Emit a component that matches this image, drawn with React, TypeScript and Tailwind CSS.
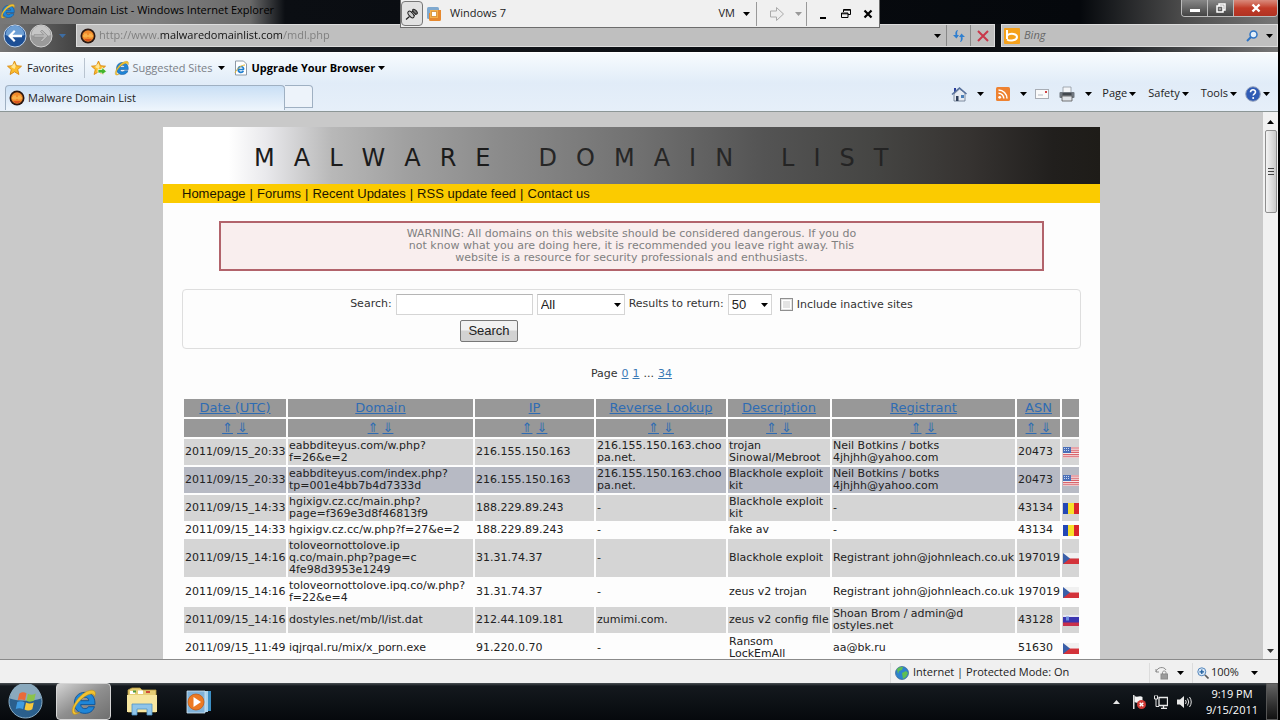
import type { ReactNode } from "react";

const ui = "font-['Open_Sans','Noto_Sans',sans-serif]";
const verdana = "font-['DejaVu_Sans',Verdana,sans-serif]";
const arial = "font-['Liberation_Sans',Arial,sans-serif]";

function Caret({ className = "text-black" }: { className?: string }) {
  return (
    <svg className={"h-1 w-[7px] shrink-0 " + className} viewBox="0 0 7 4" aria-hidden="true">
      <path d="M0 0h7L3.5 4z" fill="currentColor" />
    </svg>
  );
}

function IeLogo({ className = "size-4" }: { className?: string }) {
  return (
    <svg className={"shrink-0 " + className} viewBox="0 0 32 32" aria-hidden="true">
      <path
        d="M28.5 19H12.2c.3 3 2.2 4.6 4.8 4.6 2 0 3.300-.8 4-2.200h6.900C26.400 26.300 22.600 29 17 29 9.600 29 5 24.300 5 17.300 5 10 9.800 5 17 5c7.300 0 11.500 5 11.500 12.300zM12.300 14.500h9.200c-.3-2.500-2-4-4.500-4-2.600 0-4.300 1.500-4.700 4z"
        fill="#1f86d8"
        stroke="#0c4f93"
        strokeWidth="1"
      />
      <path
        d="M3.500 29.500C-.5 25 8 10 18 4.500 24 1.500 29 2 29 6c0 1.500-.5 3-1 4 0-3-3-4.500-8-2C11 12.500 3 23 5.500 27.500c1 1.500 3.500 1 6-.2-3 2.700-6.500 3.700-8 2.200z"
        fill="#f2c230"
        stroke="#b98a12"
        strokeWidth=".6"
      />
    </svg>
  );
}

function SiteIcon() {
  return (
    <svg className="size-4 shrink-0" viewBox="0 0 16 16" aria-hidden="true">
      <circle cx="8" cy="8" r="7.500" fill="#2a1712" />
      <circle cx="8" cy="8" r="5.800" fill="#f08a2c" />
      <path d="M3 7.500h10v1H3z" fill="#ffd35c" />
      <path d="M4 5.500h3v4H4zM9 5.500h3v4H9z" fill="#f9b04a" />
      <path d="M4 11h8l-2 2H6z" fill="#d9541e" />
    </svg>
  );
}

function Star({ add = false }: { add?: boolean }) {
  return (
    <svg className="size-4 shrink-0" viewBox="0 0 16 16" aria-hidden="true">
      <path
        d="M7.500 1l2 4.700 5 .5-3.800 3.300 1.200 5-4.400-2.700L3.100 14.500l1.200-5L.500 6.200l5-.5z"
        fill="#fbbd2c"
        stroke="#d98a12"
        strokeWidth=".9"
      />
      <path d="M7.500 3l1.200 3.500L7.500 9 4 7z" fill="#ffe696" />
      {add && <path d="M7 9.500h4V7.500l4.500 3.800L11 15v-2H7z" fill="#44b52c" stroke="#fff" strokeWidth=".7" />}
    </svg>
  );
}

function Pin() {
  return (
    <svg className="size-3.5" viewBox="0 0 14 14" fill="none" stroke="#222" aria-hidden="true">
      <path d="M1 12.500l3.500-3" strokeWidth="1.200" />
      <ellipse cx="6" cy="7.500" rx="2" ry="4" transform="rotate(-42 6 7.500)" fill="#ccc" />
      <path d="M6 5.500l3-2M8.800 9l2.500-2.500" />
      <ellipse cx="10" cy="4.700" rx="1.500" ry="3" transform="rotate(-42 10 4.700)" fill="#777" />
    </svg>
  );
}

function VmTile() {
  return (
    <svg className="size-4" viewBox="0 0 16 16" aria-hidden="true">
      <rect x="1" y="1" width="12" height="12" rx="1.500" fill="#7fa9cf" />
      <path d="M3 7h8v-3h4v9.500a1.500 1.500 0 0 1-1.500 1.500h-9A1.500 1.500 0 0 1 3 13.500z" fill="#e6892f" />
      <rect x="4" y="4" width="8" height="8" fill="#f5b04c" />
      <rect x="5.500" y="5.500" width="5" height="5" fill="#fff" stroke="#d99a45" />
    </svg>
  );
}

function VmBar() {
  return (
    <div
      className={
        "absolute top-0 left-1/2 z-10 flex h-7 w-[480px] -translate-x-1/2 items-center border-x border-b border-[#6d6d6d] bg-[#f0f0f0] text-[11px] text-[#222] " +
        ui
      }
    >
      <button aria-label="Pin toolbar" className="flex h-[25px] w-[22px] items-center justify-center rounded-sm border border-[#777] bg-[#e2e2e2]">
        <Pin />
      </button>
      <span className="ml-[3px] flex items-center gap-2">
        <VmTile />
        Windows 7
      </span>
      <button className="ml-auto flex h-6 items-center gap-2 pr-1.5">
        VM <Caret />
      </button>
      <div className="flex h-6 items-center gap-2.5 border-x border-[#999] pr-1 pl-3">
        <svg className="h-4 w-4" viewBox="0 0 16 16" aria-hidden="true">
          <path d="M1.500 5h6V1.500l7 6.500-7 6.500V11h-6z" fill="#eee" stroke="#aaa" />
        </svg>
        <Caret className="text-[#999]" />
      </div>
      <div className="flex items-center gap-3 pr-1.5 pl-2.5 text-black">
        <button aria-label="Minimize toolbar" className="flex h-3 w-3 items-end justify-center">
          <span className="mb-px h-0.5 w-1.5 bg-black" />
        </button>
        <button aria-label="Restore toolbar">
          <svg className="size-2.5" viewBox="0 0 10 10" fill="none" stroke="#000" aria-hidden="true">
            <path d="M2.500 3V.5h7v5H7M.5 4h6.500v4.500H.5zM2.500 1.200h7M.5 4.800H7" />
          </svg>
        </button>
        <button aria-label="Close toolbar">
          <svg className="size-2.5" viewBox="0 0 10 10" stroke="#000" strokeWidth="2.200" aria-hidden="true">
            <path d="M1.500 1.500l7 7M8.500 1.500l-7 7" />
          </svg>
        </button>
      </div>
    </div>
  );
}

function TitleBar() {
  return (
    <div className="flex h-6 items-start justify-between bg-[linear-gradient(90deg,#777_0px,#828282_140px,#6a6a6a_250px,#0b0e13_285px,#05080c_1080px,#4a4a4a_1180px,#777_100%)]">
      <div className="flex h-[21px] items-center gap-1 text-[11px] text-black">
        <IeLogo />
        <span>Malware Domain List - Windows Internet Explorer</span>
      </div>
      <div className="flex h-[17px] overflow-hidden rounded-b border border-t-0 border-[#bbb]">
        <button aria-label="Minimize" className="flex w-[26px] items-end justify-center border-r border-[#bbb] bg-linear-to-b from-[#888] to-[#444] pb-1">
          <span className="h-[3px] w-2.5 bg-white" />
        </button>
        <button aria-label="Restore" className="flex w-[26px] items-center justify-center border-r border-[#bbb] bg-linear-to-b from-[#888] to-[#444]">
          <svg className="size-2.5" viewBox="0 0 10 10" fill="none" stroke="#fff" strokeWidth="1.500" aria-hidden="true">
            <path d="M3 3V1h6v6H7M1 3h6v6H1z" />
            <path d="M3.500 6h1" />
          </svg>
        </button>
        <button aria-label="Close" className="flex w-[43px] items-center justify-center bg-linear-to-b from-[#d98a7c] via-[#c23b28] to-[#b03222]">
          <svg className="size-2.5" viewBox="0 0 10 10" stroke="#fff" strokeWidth="2.400" aria-hidden="true">
            <path d="M1.500 1.500l7 7M8.500 1.500l-7 7" />
          </svg>
        </button>
      </div>
    </div>
  );
}

function RoundArrow({ back = false }: { back?: boolean }) {
  return (
    <svg className="size-[24px]" viewBox="0 0 24 24" aria-hidden="true">
      <circle cx="12" cy="12" r="11" fill={back ? "#1d4f95" : "#9a9a9a"} stroke={back ? "#c4d6ea" : "#d0d0d0"} />
      <path d="M2.500 11a9.500 9.500 0 0 1 19 0c-5 2-14 2-19 0z" fill={back ? "#6e9fd4" : "#c6c6c6"} />
      {back ? (
        <path d="M5 12l6-6 1.500 1.500-3 3.200H19v2.600H9.500l3 3.200L11 18z" fill="#fff" />
      ) : (
        <path d="M19 12l-6-6-1.500 1.500 3 3.200H5v2.600h9.500l-3 3.200L13 18z" fill="#b8b8b8" stroke="#8c8c8c" strokeWidth=".7" />
      )}
    </svg>
  );
}

function AddressRow() {
  return (
    <div className="flex h-7 items-start bg-[linear-gradient(90deg,#777_0px,#444_75px,#181b20_300px,#05080c_900px,#15181c_1100px,#777_100%)] text-[11px]">
      <div className="flex w-[76px] items-center gap-0.5 pl-[3px]">
        <button aria-label="Back">
          <RoundArrow back />
        </button>
        <button aria-label="Forward">
          <RoundArrow />
        </button>
        <button aria-label="Recent pages" className="pl-1">
          <Caret className="text-[#3d6da3]" />
        </button>
      </div>
      <div className="flex h-[23px] min-w-0 flex-1 items-center border border-[#dcdcdc] bg-[#bfbfbf] pl-[3px]">
        <SiteIcon />
        <input
          aria-label="Address"
          defaultValue="http://www.malwaredomainlist.com/mdl.php"
          className="ml-[3px] min-w-0 flex-1 bg-[linear-gradient(90deg,#7d7d7d_61px,#111_61px,#111_183px,#7d7d7d_183px)] bg-clip-text text-transparent outline-none"
        />
        <button aria-label="Address history" className="flex h-full w-[18px] items-center justify-center">
          <Caret />
        </button>
        <button aria-label="Refresh" className="flex h-full w-6 items-center justify-center border-l border-[#888]">
          <svg className="size-3.5" viewBox="0 0 14 14" aria-hidden="true">
            <path d="M5.500 1C3.500 2 3 3.500 3.500 6H1l3.500 3.500L7 6H5.300C5 4 5 2.500 6 1zM8.500 13c2-1 2.500-2.500 2-5H13L9.500 4.500 7 8h1.700c.3 2 .3 3.500-.7 5z" fill="#2f7fd0" />
          </svg>
        </button>
        <button aria-label="Stop" className="flex h-full w-6 items-center justify-center border-l border-[#888]">
          <svg className="size-3" viewBox="0 0 12 12" stroke="#c9374a" strokeWidth="2" aria-hidden="true">
            <path d="M1 1l10 10M11 1L1 11" />
          </svg>
        </button>
      </div>
      <div className="ml-1.5 flex h-[23px] w-[277px] items-center border border-[#dcdcdc] bg-[#bfbfbf] pl-0.5">
        <svg className="size-4" viewBox="0 0 16 16" aria-hidden="true">
          <rect width="16" height="16" rx="1" fill="#f5a11c" />
          <path d="M3 2v9M3 7.500c4-3 10-1.500 10 1.500 0 3.500-7 4.500-10 2.500" fill="none" stroke="#fff" strokeWidth="2" />
        </svg>
        <input aria-label="Search with Bing" placeholder="Bing" className="ml-1 min-w-0 flex-1 italic outline-none placeholder:text-[#666]" />
        <button aria-label="Search the web" className="px-2">
          <svg className="size-3" viewBox="0 0 12 12" fill="none" aria-hidden="true">
            <circle cx="7.500" cy="4.500" r="3.500" stroke="#2f74c4" strokeWidth="1.500" fill="#e3effa" />
            <path d="M5 7l-4 4" stroke="#2f74c4" strokeWidth="2" />
          </svg>
        </button>
        <button aria-label="Search options" className="pr-1">
          <Caret />
        </button>
      </div>
    </div>
  );
}

function FavoritesBar() {
  return (
    <div className="flex h-[31px] items-center border-t border-white bg-linear-to-b from-[#f7fbfe] to-[#e1ecf8] pl-[7px] text-[11px] text-[#222]">
      <button className="flex items-center gap-1">
        <Star /> Favorites
      </button>
      <span className="mr-1.5 ml-2.5 h-5 w-px bg-[#b9c4d0]" />
      <button aria-label="Add to Favorites Bar">
        <Star add />
      </button>
      <button className="ml-[7px] flex items-center gap-[3px] text-[#7b8087]">
        <IeLogo /> Suggested Sites <Caret className="ml-0.5 text-black" />
      </button>
      <button className="ml-2 flex items-center gap-[3px] font-bold text-black">
        <svg className="size-4" viewBox="0 0 16 16" aria-hidden="true">
          <path d="M2.500 1h8l3 3v11h-11z" fill="#fff" stroke="#8d99a6" />
          <path d="M11 9.500H5.500M10.700 9.500c0-4-5.500-4-5.500 0 0 3.500 4 3.500 5.200 1.500" fill="none" stroke="#1f7fd0" strokeWidth="1.700" />
          <path d="M2 13C4 8 9 5 12 5" stroke="#e7b52c" fill="none" />
        </svg>
        Upgrade Your Browser <Caret />
      </button>
    </div>
  );
}

function TabRow() {
  return (
    <div className="flex h-[29px] items-end border-b border-[#8c9696] bg-linear-to-b from-[#e1ecf8] to-[#e6eff9] pb-px pl-[5px] text-[11px] text-[#222]">
      <div role="tablist" className="flex items-end self-stretch">
        <button role="tab" aria-selected="true" className="flex h-[25px] w-[280px] items-center gap-[3px] rounded-t border border-b-0 border-[#9fb0c2] bg-linear-to-b from-[#c9dff5] to-[#eef5fc] pl-[3px]">
          <SiteIcon /> Malware Domain List
        </button>
        <button role="tab" aria-label="New tab" className="mb-0.5 h-[23px] w-7 rounded-tr border border-l-0 border-[#9fb0c2] bg-[#edf3fa]" />
      </div>
      <div className="ml-auto flex items-center self-stretch pr-2 pb-1.5">
        <button className="flex items-center gap-2.5" aria-label="Home">
          <svg className="size-4" viewBox="0 0 16 16" aria-hidden="true">
            <path d="M3 2h2v4H3z" fill="#2b3f9c" />
            <path d="M3 8v7h11V7L8.500 3z" fill="#e6ebf2" stroke="#64748a" strokeWidth=".8" />
            <path d="M1 8.500L8.500 2 15.500 8" fill="none" stroke="#56709c" strokeWidth="1.500" />
            <path d="M5 10h2.500v5H5z" fill="#2f3f59" />
            <path d="M10 9h3v3h-3z" fill="#4a7fb8" />
          </svg>
          <Caret />
        </button>
        <button className="ml-3 flex items-center gap-2.5" aria-label="Feeds">
          <svg className="size-3.5" viewBox="0 0 14 14" aria-hidden="true">
            <rect width="14" height="14" rx="1.500" fill="#ee8231" />
            <circle cx="3.700" cy="10.300" r="1.400" fill="#fff" />
            <path d="M2.500 6.200a5.300 5.300 0 0 1 5.300 5.300M2.500 3a8.500 8.500 0 0 1 8.500 8.500" fill="none" stroke="#fff" strokeWidth="1.500" />
          </svg>
          <Caret />
        </button>
        <button className="ml-2" aria-label="Read mail">
          <svg className="h-2.5 w-3.5" viewBox="0 0 14 10" aria-hidden="true">
            <rect x=".5" y=".5" width="13" height="9" fill="#fafafa" stroke="#a8adb5" />
            <path d="M10 2h2v2h-2z" fill="#d04545" />
            <path d="M3 6h5" stroke="#b5bac2" />
          </svg>
        </button>
        <button className="ml-2.5 flex items-center gap-2.5" aria-label="Print">
          <svg className="size-4" viewBox="0 0 16 16" aria-hidden="true">
            <path d="M4 1h8v6H4z" fill="#f3f5f8" stroke="#8f979f" strokeWidth=".8" />
            <rect x=".5" y="6" width="15" height="6" rx="1" fill="#6f767e" />
            <path d="M3 10h10v5H3z" fill="#dfe3e8" stroke="#555" strokeWidth=".8" />
            <path d="M3.500 8h9" stroke="#303438" strokeWidth="1.400" />
          </svg>
          <Caret />
        </button>
        <button className="ml-2.5 flex items-center gap-0.5">
          Page <Caret />
        </button>
        <button className="ml-3 flex items-center gap-0.5">
          Safety <Caret />
        </button>
        <button className="ml-3 flex items-center gap-0.5">
          Tools <Caret />
        </button>
        <button className="ml-2 flex items-center gap-0.5" aria-label="Help">
          <svg className="size-4" viewBox="0 0 16 16" aria-hidden="true">
            <circle cx="8" cy="8" r="7.300" fill="#2f5bb5" stroke="#9aa6bd" />
            <path d="M5.500 6.300c0-3.300 5-3.300 5-.3 0 1.800-2.300 1.800-2.300 3.600" fill="none" stroke="#fff" strokeWidth="1.600" />
            <circle cx="8.200" cy="11.900" r="1" fill="#fff" />
          </svg>
          <Caret />
        </button>
      </div>
    </div>
  );
}

const banner = [
  { word: "MALWARE", tone: "text-[#1b1b1b]" },
  { word: "DOMAIN", tone: "text-[#262626]" },
  { word: "LIST", tone: "text-[#242424]" },
];

function Banner() {
  return (
    <h1
      aria-label="Malware Domain List"
      className={
        "flex h-[57px] items-center gap-12 bg-[linear-gradient(90deg,#fff_0%,#fff_7%,#e9e9ec_11%,#b8b8b8_18%,#a0a0a0_26%,#8b8b8b_36%,#727272_50%,#545454_64%,#454543_76%,#363331_86%,#211f1d_95%,#1e1c18_100%)] pt-1 pl-[91px] text-2xl font-normal " +
        verdana
      }
    >
      {banner.map(({ word, tone }) => (
        <span key={word} className={"flex gap-[19px] " + tone}>
          {word.split("").map((letter, i) => (
            <span key={i}>{letter}</span>
          ))}
        </span>
      ))}
    </h1>
  );
}

const links = ["Homepage", "Forums", "Recent Updates", "RSS update feed", "Contact us"];

function SiteNav() {
  return (
    <nav className={"flex h-[19px] items-center gap-1 bg-[#fbcb00] pl-[19px] text-[13px] text-[#1d1600] " + arial}>
      {links.map((link, i) => (
        <span key={link} className="flex gap-1">
          {i > 0 && <span>|</span>}
          <a href="#">{link}</a>
        </span>
      ))}
    </nav>
  );
}

function Drop({ id, width, options }: { id: string; width: string; options: string[] }) {
  return (
    <span className={"relative flex items-center " + width}>
      <select id={id} aria-label={id} className={"h-[21px] w-full appearance-none border border-[#d5d5d5] border-t-[#b5b5b5] bg-white pl-[3px] text-[13px] text-[#222] " + arial}>
        {options.map((o) => (
          <option key={o}>{o}</option>
        ))}
      </select>
      <span className="pointer-events-none absolute right-1 flex">
        <Caret />
      </span>
    </span>
  );
}

function SearchForm() {
  return (
    <form className="mx-[19px] mt-[18px] flex h-[60px] flex-col gap-[5px] rounded-sm border border-[#dedede] pt-1 text-[11px] text-[#333]" onSubmit={(e) => e.preventDefault()}>
      <div className="flex items-center justify-center gap-1">
        <label htmlFor="query">Search:</label>
        <input id="query" className="h-[21px] w-[137px] border border-[#d5d5d5] border-t-[#b5b5b5] bg-white px-1" />
        <Drop id="Field" width="w-[88px]" options={["All", "Domain", "IP", "ASN"]} />
        <label htmlFor="Results">Results to return:</label>
        <Drop id="Results" width="w-[44px]" options={["50", "100"]} />
        <input id="inactive" type="checkbox" className="ml-1 size-[13px] appearance-none border border-[#8f8f8f] bg-[#e4e4e4] outline-1 -outline-offset-3 outline-white" />
        <label htmlFor="inactive" className="pt-0.5">Include inactive sites</label>
      </div>
      <button className={"ml-[277px] h-[22px] w-[58px] rounded-xs border border-[#777] bg-linear-to-b from-[#f2f2f2] from-45% to-[#d2d2d2] to-50% text-[13px] text-[#222] " + arial}>
        Search
      </button>
    </form>
  );
}

function Flag({ country }: { country: string }) {
  const art: Record<string, ReactNode> = {
    us: (
      <>
        <path fill="#f4e9ea" d="M0 0h16v11H0z" />
        <path stroke="#d9636b" strokeWidth="1.100" d="M0 1h16M0 3.200h16M0 5.400h16M0 7.600h16M0 9.800h16" />
        <path fill="#4a6fb8" d="M0 0h8v6H0z" />
        <path stroke="#c9d6ee" strokeDasharray="1 1" d="M1 1.500h6M1 3.500h6" />
      </>
    ),
    ro: (
      <>
        <path fill="#2447b5" d="M0 0h5v11H0z" />
        <path fill="#f6df2a" d="M5 0h6v11H5z" />
        <path fill="#d9252b" d="M11 0h5v11h-5z" />
      </>
    ),
    cz: (
      <>
        <path fill="#f1f1f1" d="M0 0h16v5.500H0z" />
        <path fill="#d3333a" d="M0 5.500h16V11H0z" />
        <path fill="#3a5ea8" d="M0 0l7 5.500L0 11z" />
      </>
    ),
    si: (
      <>
        <path fill="#e6e6f2" d="M0 0h16v3H0z" />
        <path fill="#3a35b0" d="M0 2h16v6H0z" />
        <path fill="#c9304b" d="M0 7.500h16V11H0z" />
        <path fill="#6f8fe0" d="M3 1.500h3v4H3z" />
      </>
    ),
  };
  return (
    <svg className="block h-[11px] w-4" viewBox="0 0 16 11" role="img" aria-label={country}>
      {art[country]}
    </svg>
  );
}

const columns = [
  { title: "Date (UTC)", width: "w-[102px]" },
  { title: "Domain", width: "" },
  { title: "IP", width: "w-[119px]" },
  { title: "Reverse Lookup", width: "w-[130px]" },
  { title: "Description", width: "w-[102px]" },
  { title: "Registrant", width: "w-[183px]" },
  { title: "ASN", width: "w-[43px]" },
];

const gray = "bg-[#d5d5d5]";
const white = "bg-[#fdfdfd]";

const rows = [
  { tone: gray, flag: "us", cells: ["2011/09/15_20:33", "eabbditeyus.com/w.php?\nf=26&e=2", "216.155.150.163", "216.155.150.163.choo\npa.net.", "trojan\nSinowal/Mebroot", "Neil Botkins / botks\n4jhjhh@yahoo.com", "20473"] },
  { tone: "bg-[#b7bac4]", flag: "us", cells: ["2011/09/15_20:33", "eabbditeyus.com/index.php?\ntp=001e4bb7b4d7333d", "216.155.150.163", "216.155.150.163.choo\npa.net.", "Blackhole exploit\nkit", "Neil Botkins / botks\n4jhjhh@yahoo.com", "20473"] },
  { tone: gray, flag: "ro", cells: ["2011/09/15_14:33", "hgixigv.cz.cc/main.php?\npage=f369e3d8f46813f9", "188.229.89.243", "-", "Blackhole exploit\nkit", "-", "43134"] },
  { tone: white, flag: "ro", cells: ["2011/09/15_14:33", "hgixigv.cz.cc/w.php?f=27&e=2", "188.229.89.243", "-", "fake av", "-", "43134"] },
  { tone: gray, flag: "cz", cells: ["2011/09/15_14:16", "toloveornottolove.ip\nq.co/main.php?page=c\n4fe98d3953e1249", "31.31.74.37", "-", "Blackhole exploit", "Registrant john@johnleach.co.uk", "197019"] },
  { tone: white, flag: "cz", cells: ["2011/09/15_14:16", "toloveornottolove.ipq.co/w.php?\nf=22&e=4", "31.31.74.37", "-", "zeus v2 trojan", "Registrant john@johnleach.co.uk", "197019"] },
  { tone: gray, flag: "si", cells: ["2011/09/15_14:16", "dostyles.net/mb/l/ist.dat", "212.44.109.181", "zumimi.com.", "zeus v2 config file", "Shoan Brom / admin@d\nostyles.net", "43128"] },
  { tone: white, flag: "cz", cells: ["2011/09/15_11:49", "iqjrqal.ru/mix/x_porn.exe", "91.220.0.70", "-", "Ransom\nLockEmAll", "aa@bk.ru", "51630"] },
];

function DomainTable() {
  return (
    <div className="mx-[19px] mt-[15px]">
      <table className="w-full table-fixed border-separate border-spacing-0.5 text-left text-[11px] leading-3 text-[#222]">
        <colgroup>
          {columns.map((c) => (
            <col key={c.title} className={c.width} />
          ))}
          <col className="w-[17px]" />
        </colgroup>
        <thead className="text-center text-[13px] leading-4 text-[#2f6cb3]">
          <tr className="bg-[#989898]">
            {columns.map((c) => (
              <th key={c.title} scope="col" className="p-px font-normal whitespace-nowrap">
                <a href="#" className="underline">
                  {c.title}
                </a>
              </th>
            ))}
            <th className="p-px" aria-label="Country" />
          </tr>
          <tr className="bg-[#989898]">
            {columns.map((c) => (
              <td key={c.title} className="p-px">
                <span className="flex justify-center gap-1">
                  <a href="#" aria-label={"Sort ascending by " + c.title} className="underline">
                    ⇑
                  </a>
                  <a href="#" aria-label={"Sort descending by " + c.title} className="underline">
                    ⇓
                  </a>
                </span>
              </td>
            ))}
            <td className="p-px" />
          </tr>
        </thead>
        <tbody>
          {rows.map((row, r) => (
            <tr key={r} className={row.tone}>
              {row.cells.map((cell, i) => (
                <td key={i} className="p-px whitespace-pre">
                  {cell}
                </td>
              ))}
              <td className="p-px">
                <Flag country={row.flag} />
              </td>
            </tr>
          ))}
        </tbody>
      </table>
    </div>
  );
}

function Scrollbar() {
  return (
    <div className="flex w-[15px] shrink-0 flex-col items-center justify-between bg-[#f1f1f1] py-1">
      <div className="flex w-full flex-col items-center gap-0.5">
        <Caret className="my-1 rotate-180" />
        <div className="flex h-[83px] w-3 flex-col items-center justify-center gap-0.5 rounded-xs border border-[#8e8e8e] bg-linear-to-r from-[#f4f4f4] to-[#c9c9c9]">
          <span className="h-px w-1.5 bg-[#444]" />
          <span className="h-px w-1.5 bg-[#444]" />
          <span className="h-px w-1.5 bg-[#444]" />
        </div>
      </div>
      <Caret className="mb-0.5 text-[#333]" />
    </div>
  );
}

function Page() {
  return (
    <div className="flex min-h-0 flex-1 overflow-hidden bg-[#c9c9c9]">
      <main className={"min-w-0 flex-1 overflow-hidden pt-[15px] " + verdana}>
        <div className="mx-auto min-h-full w-full max-w-[937px] bg-[#fdfdfd]">
          <Banner />
          <SiteNav />
          <p className="mx-auto mt-[18px] w-[88%] border-2 border-[#b2636b] bg-[#f9eeee] py-[5px] text-center text-[11px] leading-3 text-[#808080]">
            WARNING: All domains on this website should be considered dangerous. If you do
            <br />
            not know what you are doing here, it is recommended you leave right away. This
            <br />
            website is a resource for security professionals and enthusiasts.
          </p>
          <SearchForm />
          <div className="mt-[17px] flex items-center justify-center gap-1 text-[11px] leading-4 text-[#333]">
            <span>Page</span>
            <a href="#" className="text-[#3a7ab5] underline">0</a>
            <a href="#" className="text-[#3a7ab5] underline">1</a>
            <span>...</span>
            <a href="#" className="text-[#3a7ab5] underline">34</a>
          </div>
          <DomainTable />
        </div>
      </main>
      <Scrollbar />
    </div>
  );
}

function StatusBar() {
  return (
    <div className="flex h-[24px] shrink-0 items-center justify-end border-t border-[#8a8a8a] bg-[#f0f0f0] pt-0.5 text-[11px] text-[#222]">
      <div className="flex h-5 w-[259px] items-center gap-1 border-l border-[#dcdcdc] pl-1">
        <svg className="size-3.5" viewBox="0 0 14 14" aria-hidden="true">
          <circle cx="7" cy="7" r="6.500" fill="#2d82cf" stroke="#34618c" strokeWidth=".7" />
          <path d="M2 3c2-2 4-2 6-2l-1 3-3 1-1 3zM7 7l4-2 2 2-2 4-3 2z" fill="#5fbf52" />
        </svg>
        Internet | Protected Mode: On
      </div>
      <button aria-label="Protected mode" className="flex h-5 w-[43px] items-center justify-end gap-2 border-l border-[#dcdcdc] pr-2">
        <svg className="size-3.5" viewBox="0 0 14 14" fill="none" stroke="#8b8b8b" aria-hidden="true">
          <path d="M1 6c1-5 8-6 10-2M1 6V3M1 6h3" />
          <path d="M7.500 8V6.500c0-2 3.500-2 3.500 0V8" />
          <rect x="6" y="8" width="6.500" height="5" fill="#9b9b9b" />
        </svg>
        <Caret />
      </button>
      <button className="flex h-5 w-[86px] items-center gap-0.5 border-l border-[#dcdcdc] pl-1">
        <svg className="size-3" viewBox="0 0 12 12" aria-hidden="true">
          <circle cx="4.800" cy="4.800" r="4" fill="#dceaf7" stroke="#5486bb" />
          <path d="M2.500 4.800h4.600M4.800 2.500v4.600" stroke="#1f5f9f" strokeWidth="1.300" />
          <path d="M8 8l3.500 3.500" stroke="#5a5a5a" strokeWidth="1.700" />
        </svg>
        100%
        <span className="ml-auto pr-5">
          <Caret />
        </span>
      </button>
    </div>
  );
}

function Taskbar() {
  return (
    <footer className="flex h-[37px] shrink-0 items-stretch bg-[linear-gradient(180deg,#4a5054_0px,#14191e_3px,#06090d_100%)] text-[11px] text-white">
      <button aria-label="Start" className="flex w-[56px] items-center pl-2">
        <svg className="size-[35px]" viewBox="0 0 36 36" aria-hidden="true">
          <circle cx="18" cy="18" r="17" fill="#2b5f8c" stroke="#8fb3cb" />
          <path d="M2 15a16 16 0 0 1 32 0c-9 3-23 3-32 0z" fill="#8aa9bd" />
          <path d="M11.500 10c3-2 5-2 7.500-.5L17.500 17c-2.500-1.500-5-1.500-7.500-.3z" fill="#ea6a3a" />
          <path d="M20.500 10c2.500 1.300 5 1.300 8-.3L27 17c-3 1.500-5.500 1.500-8 .3z" fill="#8bc34a" />
          <path d="M9.500 18.500c2.500-1.200 5-1.200 7.500.2L15.500 26c-2.500-1.500-5-1.500-7.500-.3z" fill="#3f9be0" />
          <path d="M18.500 19c2.500 1.300 5 1.300 8 0L25 26c-3 1.600-5.500 1.600-8 .2z" fill="#f7c83b" />
        </svg>
      </button>
      <button aria-label="Internet Explorer" className="flex w-[55px] items-center justify-center rounded-sm border border-[#d5d5d5] bg-linear-to-br from-[#d4d4d4] via-[#8f8f8f] to-[#6f6f6f]">
        <IeLogo className="size-7" />
      </button>
      <button aria-label="Windows Explorer" className="ml-[15px] flex items-center">
        <svg className="h-[29px] w-8" viewBox="0 0 32 29" aria-hidden="true">
          <path d="M2 3l4-2h8l2 2h14v22H2z" fill="#e5cd76" stroke="#b99b3f" strokeWidth=".8" />
          <path d="M4 4h5v3H4zM12 3.500h5V7h-5z" fill="#fff" />
          <path d="M7 3.500h3v2H7z" fill="#4f9a3e" />
          <path d="M20 4h4v2h-4z" fill="#d04a38" />
          <path d="M1 8h30v17H1z" fill="#f7e6a0" />
          <path d="M6 28V17h20v11h-5v-6H11v6z" fill="#8fc5ea" stroke="#4f93c4" strokeWidth=".8" />
        </svg>
      </button>
      <button aria-label="Media Player" className="ml-7 flex items-center">
        <svg className="h-6 w-[26px]" viewBox="0 0 26 24" aria-hidden="true">
          <path d="M8 1h17v20H8z" fill="#3d8fc4" />
          <path d="M5 1h17v21H5z" fill="#a9d2ec" />
          <path d="M1 1h18v22H1z" fill="#7fb2d9" stroke="#d3e6f3" strokeWidth=".8" />
          <circle cx="10" cy="12" r="8" fill="#ec7a22" stroke="#c2560f" strokeWidth=".7" />
          <path d="M7.500 7l7.500 5-7.500 5z" fill="#fff" />
        </svg>
      </button>
      <div className="ml-auto flex items-center">
        <button aria-label="Show hidden icons" className="mr-3">
          <Caret className="rotate-180 text-[#e6e6e6]" />
        </button>
        <svg className="mr-2 size-3.5" viewBox="0 0 14 14" aria-hidden="true">
          <path d="M1 0h1.500v14H1z" fill="#ddd" />
          <path d="M2.500 1c3 2 5-1 8 1v6c-3-2-5 1-8-1z" fill="#f4f4f4" />
          <circle cx="9.500" cy="9.500" r="4.500" fill="#d13a35" />
          <path d="M7.700 7.700l3.600 3.600M11.300 7.700l-3.600 3.600" stroke="#fff" strokeWidth="1.400" />
        </svg>
        <svg className="mr-2 size-3.5" viewBox="0 0 14 14" fill="none" stroke="#e8e8e8" aria-hidden="true">
          <path d="M5 2.500h8.500v8H5zM7 13.500h6M9.500 10.500v3" strokeWidth="1.300" />
          <path d="M.5 1v3h3V1M2 4v7.500h3M1 0v1M3 0v1" />
        </svg>
        <svg className="h-3.5 w-4" viewBox="0 0 16 14" aria-hidden="true">
          <path d="M1 4.500h3L8 1v12L4 9.500H1z" fill="#e8e8e8" />
          <path d="M9.500 5q1.500 2 0 4M11.500 3.500q2.500 3.500 0 7M13.500 2q3.500 5 0 10" fill="none" stroke="#e8e8e8" />
        </svg>
        <div className="ml-1.5 flex w-[68px] flex-col items-center text-center leading-4">
          <span>9:19 PM</span>
          <span>9/15/2011</span>
        </div>
        <button aria-label="Show desktop" className="h-full w-3 border border-[#555] bg-linear-to-b from-[#666] to-[#111]" />
      </div>
    </footer>
  );
}

export default function App() {
  return (
    <div className={"relative flex h-screen flex-col overflow-hidden bg-black pr-0.5 " + ui}>
      <VmBar />
      <header className="shrink-0">
        <TitleBar />
        <AddressRow />
        <FavoritesBar />
        <TabRow />
      </header>
      <Page />
      <StatusBar />
      <Taskbar />
    </div>
  );
}
